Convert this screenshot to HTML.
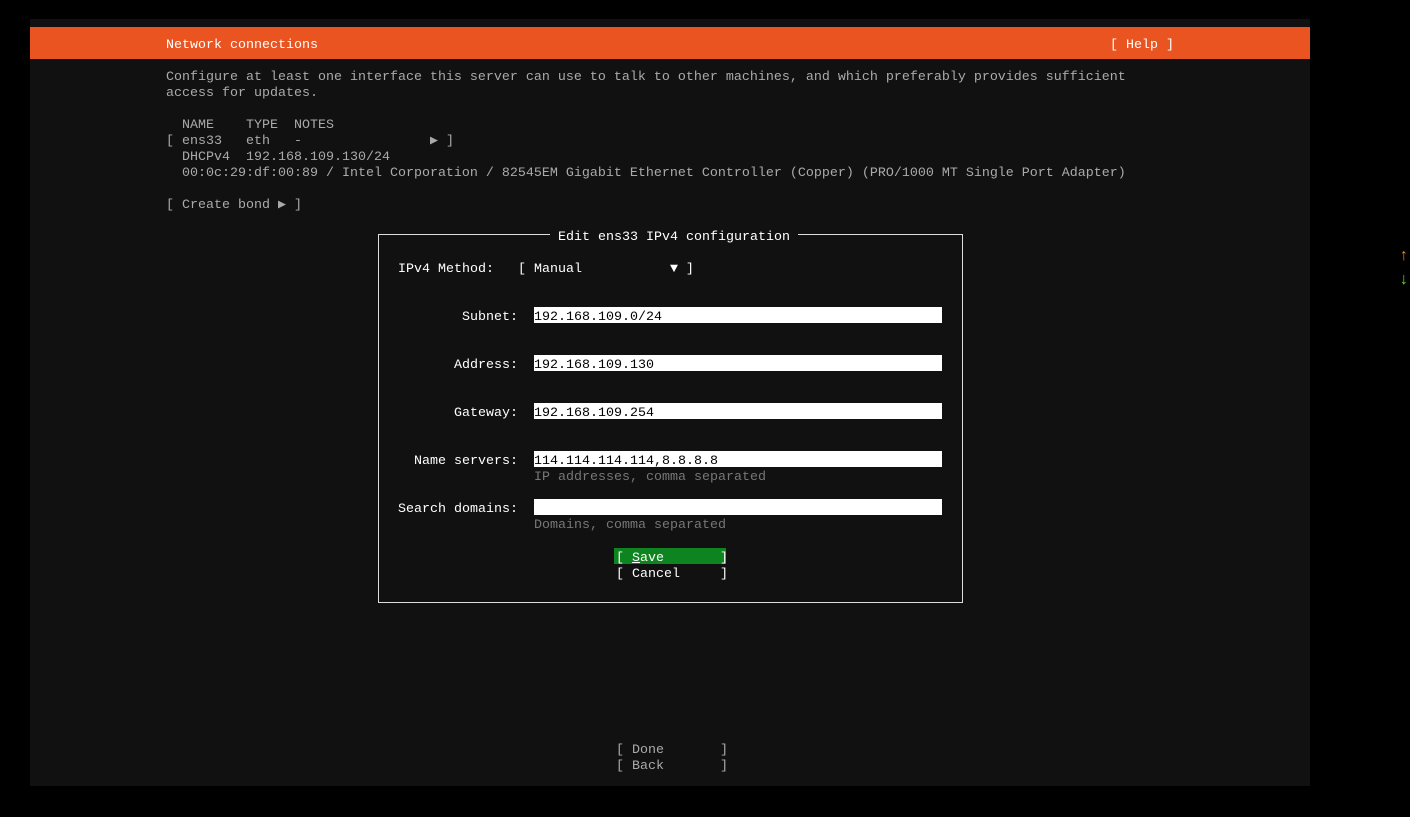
<!DOCTYPE html>
<html><head><style>
body{margin:0;width:1410px;height:817px;background:#000;overflow:hidden;position:relative;font-family:"Liberation Mono",monospace;font-size:13.33px}
.p{position:absolute;left:30px;top:19px;width:1280px;height:767px;background:#111}
.bar{position:absolute;left:30px;top:27px;width:1280px;height:32px;background:#e95420}
.t{position:absolute;white-space:pre;line-height:16px;color:#aaa;transform:translateY(3px)}
.w{color:#fff}
.f{position:absolute;left:534px;width:408px;height:16px;background:#fff;color:#000;line-height:16px;white-space:pre;overflow:hidden}
.f span{position:relative;top:3px}
.lab{position:absolute;right:892px;white-space:pre;line-height:16px;color:#fff;transform:translateY(3px)}
</style></head><body>
<div class="p"></div>
<div class="bar"></div>
<div class="t w" style="left:166px;top:35px">Network connections</div>
<div class="t w" style="left:1110px;top:35px">[ Help ]</div>
<div class="t" style="left:166px;top:67px">Configure at least one interface this server can use to talk to other machines, and which preferably provides sufficient
access for updates.</div>
<div class="t" style="left:166px;top:115px">  NAME    TYPE  NOTES
[ ens33   eth   -                ▶ ]
  DHCPv4  192.168.109.130/24
  00:0c:29:df:00:89 / Intel Corporation / 82545EM Gigabit Ethernet Controller (Copper) (PRO/1000 MT Single Port Adapter)</div>
<div class="t" style="left:166px;top:195px">[ Create bond ▶ ]</div>

<div style="position:absolute;left:378px;top:234px;width:583px;height:367px;border:1px solid #ddd"></div>
<div style="position:absolute;left:550px;top:230px;width:248px;height:10px;background:#111"></div>
<div class="t w" style="left:558px;top:227px">Edit ens33 IPv4 configuration</div>
<div class="t w" style="left:398px;top:259px">IPv4 Method:   [ Manual           ▼ ]</div>
<div class="lab" style="top:307px">Subnet:</div><div class="f" style="top:307px"><span>192.168.109.0/24</span></div>
<div class="lab" style="top:355px">Address:</div><div class="f" style="top:355px"><span>192.168.109.130</span></div>
<div class="lab" style="top:403px">Gateway:</div><div class="f" style="top:403px"><span>192.168.109.254</span></div>
<div class="lab" style="top:451px">Name servers:</div><div class="f" style="top:451px"><span>114.114.114.114,8.8.8.8</span></div>
<div class="t" style="left:534px;top:467px;color:#777">IP addresses, comma separated</div>
<div class="lab" style="top:499px">Search domains:</div><div class="f" style="top:499px"></div>
<div class="t" style="left:534px;top:515px;color:#777">Domains, comma separated</div>
<div style="position:absolute;left:614px;top:548px;width:112px;height:16px;background:#0e8420"></div>
<div class="t w" style="left:616px;top:548px">[ <u>S</u>ave       ]</div>
<div class="t w" style="left:616px;top:564px">[ Cancel     ]</div>
<div class="t" style="left:616px;top:740px">[ Done       ]
[ Back       ]</div>
<div class="t" style="left:1399px;top:245px;color:#e9881f;font-size:16px;font-weight:bold">↑</div>
<div class="t" style="left:1399px;top:269px;color:#6ad72a;font-size:16px;font-weight:bold">↓</div>
</body></html>
